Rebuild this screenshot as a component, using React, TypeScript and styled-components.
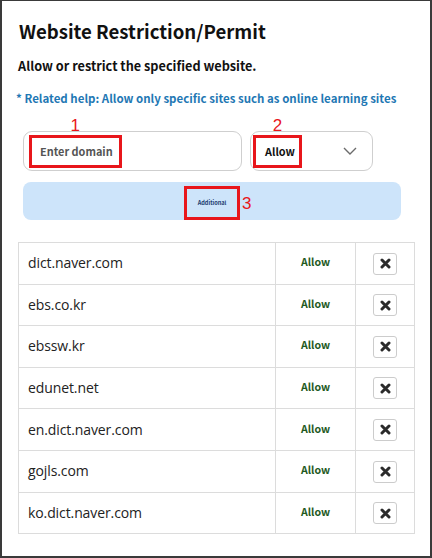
import React from "react";
import styled, { createGlobalStyle } from "styled-components";

const Global = createGlobalStyle`
  html, body { margin: 0; padding: 0; background: #ffffff; }
  * { box-sizing: border-box; }
`;

const Frame = styled.div`
  width: 432px;
  height: 558px;
  border: 2px solid #3a3a3a;
  border-top-width: 1px;
  background: #ffffff;
  padding: 17px 16px 0 16px;
  font-family: "Noto Sans CJK KR", "Noto Sans", sans-serif;
  overflow: hidden;
`;

const Title = styled.h1`
  margin: 0 0 0 1px;
  font-size: 18.6px;
  line-height: 26px;
  font-weight: 700;
  color: #111111;
`;

const Subtitle = styled.p`
  margin: 13px 0 0 0;
  font-size: 12.7px;
  line-height: 18px;
  font-weight: 700;
  color: #111111;
`;

const Help = styled.p`
  margin: 15px 0 0 -2px;
  font-size: 11.5px;
  line-height: 16px;
  font-weight: 700;
  color: #1f78b4;
  white-space: nowrap;
`;

const Form = styled.div`
  margin: 25px 0 0 5px;
  width: 378px;
  display: flex;
  flex-direction: column;
  gap: 11px;
`;

const FieldRow = styled.div`
  display: flex;
  gap: 8px;
`;

const Field = styled.div<{ $w: number; $inset: number }>`
  width: ${(p) => p.$w}px;
  height: 40px;
  border: 1px solid #cfcfcf;
  border-radius: 9px;
  display: flex;
  align-items: center;
  justify-content: space-between;
  padding: 0 15px 0 ${(p) => p.$inset}px;
  font-size: 10.9px;
  font-weight: 700;
`;

const Mark = styled.span<{ $pad: string }>`
  position: relative;
  display: inline-flex;
  align-items: center;
  border: 3px solid #e8161b;
  height: 33px;
  padding: ${(p) => p.$pad};
`;

const MarkNo = styled.span<{ $side: "top" | "right" }>`
  position: absolute;
  font-family: "Liberation Sans", Arial, sans-serif;
  font-weight: 400;
  font-size: 17px;
  line-height: 17px;
  color: #e8161b;
  ${(p) =>
    p.$side === "top"
      ? `top: -21px; left: 50%; transform: translateX(-50%);`
      : `right: -14px; top: 50%; transform: translateY(-50%);`}
`;

const Placeholder = styled.span`
  color: #555555;
`;

const SelectValue = styled.span`
  color: #111111;
`;

const AddButton = styled.button`
  width: 378px;
  height: 38px;
  border: none;
  border-radius: 8px;
  background: #cde4fa;
  display: flex;
  align-items: center;
  justify-content: center;
  padding: 0;
  cursor: pointer;
`;

const AddMark = styled(Mark)`
  height: 34px;
  margin-top: 4px;
`;

const AddLabel = styled.span`
  font-family: "Noto Sans CJK KR", "Noto Sans", sans-serif;
  font-size: 5.6px;
  font-weight: 700;
  color: #1c3b6e;
`;

const Table = styled.table`
  margin-top: 22px;
  width: 396px;
  border-collapse: collapse;
  table-layout: fixed;
`;

const Cell = styled.td<{ $w: number; $center?: boolean }>`
  width: ${(p) => p.$w}px;
  height: 41.6px;
  border: 1px solid #dcdcdc;
  padding: 0 ${(p) => (p.$center ? 0 : 9)}px;
  text-align: ${(p) => (p.$center ? "center" : "left")};
  vertical-align: middle;
`;

const Domain = styled.span`
  font-family: "Open Sans", "Liberation Sans", sans-serif;
  font-size: 14px;
  letter-spacing: -0.1px;
  color: #222222;
  position: relative;
  top: -2px;
`;

const Status = styled.span`
  font-family: "Noto Sans CJK KR", "Noto Sans", sans-serif;
  font-size: 10.6px;
  font-weight: 700;
  color: #1f5a1f;
  position: relative;
  top: -4px;
`;

const DeleteButton = styled.button`
  width: 24px;
  height: 22px;
  border: 1px solid #cccccc;
  border-radius: 3px;
  background: #ffffff;
  display: inline-flex;
  align-items: center;
  justify-content: center;
  padding: 0;
  cursor: pointer;
  position: relative;
  top: -1px;
`;

const Chevron = () => (
  <svg width="14" height="8" viewBox="0 0 14 8" fill="none">
    <path d="M1 1l6 6 6-6" stroke="#6b6b6b" strokeWidth="1.4" />
  </svg>
);

const Cross = () => (
  <svg width="11" height="11" viewBox="0 0 11 11">
    <path d="M2 2l7 7M9 2l-7 7" stroke="#2b2b2b" strokeWidth="3" strokeLinecap="round" />
  </svg>
);

const sites = [
  "dict.naver.com",
  "ebs.co.kr",
  "ebssw.kr",
  "edunet.net",
  "en.dict.naver.com",
  "gojls.com",
  "ko.dict.naver.com",
];

export default function App() {
  return (
    <>
      <Global />
      <Frame>
        <Title>Website Restriction/Permit</Title>
        <Subtitle>Allow or restrict the specified website.</Subtitle>
        <Help>* Related help: Allow only specific sites such as online learning sites</Help>
        <Form>
          <FieldRow>
            <Field $w={219} $inset={5}>
              <Mark $pad="0 6px 0 8px">
                <MarkNo $side="top">1</MarkNo>
                <Placeholder>Enter domain</Placeholder>
              </Mark>
            </Field>
            <Field $w={123} $inset={2}>
              <Mark $pad="0 4px 0 9px">
                <MarkNo $side="top">2</MarkNo>
                <SelectValue>Allow</SelectValue>
              </Mark>
              <Chevron />
            </Field>
          </FieldRow>
          <AddButton>
            <AddMark $pad="0 11px">
              <MarkNo $side="right">3</MarkNo>
              <AddLabel>Additional</AddLabel>
            </AddMark>
          </AddButton>
        </Form>
        <Table>
          <tbody>
            {sites.map((s) => (
              <tr key={s}>
                <Cell $w={257}>
                  <Domain>{s}</Domain>
                </Cell>
                <Cell $w={80} $center>
                  <Status>Allow</Status>
                </Cell>
                <Cell $w={59} $center>
                  <DeleteButton aria-label="remove">
                    <Cross />
                  </DeleteButton>
                </Cell>
              </tr>
            ))}
          </tbody>
        </Table>
      </Frame>
    </>
  );
}
